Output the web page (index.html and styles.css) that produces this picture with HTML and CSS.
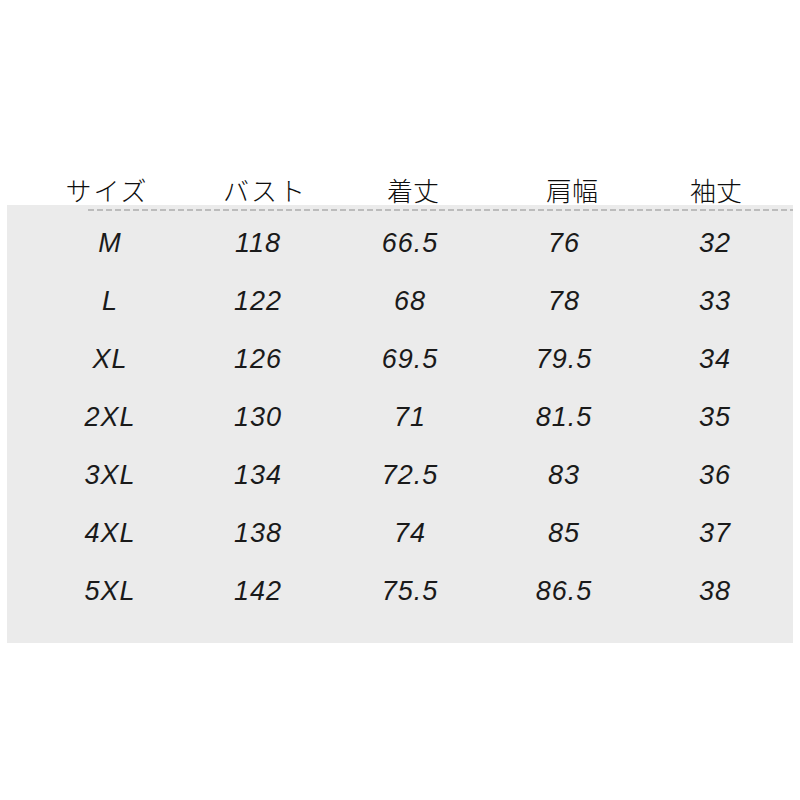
FILE: index.html
```html
<!DOCTYPE html>
<html lang="ja">
<head>
<meta charset="utf-8">
<title>サイズ表</title>
<link rel="stylesheet" href="styles.css">
</head>
<body>
<div class="page">
  <div class="head-row">
    <div class="hcell h1">サイズ</div>
    <div class="hcell h2">バスト</div>
    <div class="hcell h3">着丈</div>
    <div class="hcell h4">肩幅</div>
    <div class="hcell h5">袖丈</div>
  </div>
  <div class="panel">
    <div class="dash"></div>
    <div class="row"><span>M</span><span>118</span><span>66.5</span><span>76</span><span>32</span></div>
    <div class="row"><span>L</span><span>122</span><span>68</span><span>78</span><span>33</span></div>
    <div class="row"><span>XL</span><span>126</span><span>69.5</span><span>79.5</span><span>34</span></div>
    <div class="row"><span>2XL</span><span>130</span><span>71</span><span>81.5</span><span>35</span></div>
    <div class="row"><span>3XL</span><span>134</span><span>72.5</span><span>83</span><span>36</span></div>
    <div class="row"><span>4XL</span><span>138</span><span>74</span><span>85</span><span>37</span></div>
    <div class="row"><span>5XL</span><span>142</span><span>75.5</span><span>86.5</span><span>38</span></div>
  </div>
</div>
</body>
</html>
```
FILE: styles.css
```css
html, body {
  margin: 0;
  padding: 0;
  background: #ffffff;
}
.page {
  width: 800px;
  height: 800px;
  padding-top: 175px;
  box-sizing: border-box;
}
.head-row {
  display: grid;
  grid-template-columns: 150px 166px 130px 188px 100px;
  padding-left: 32px;
  height: 30px;
}
.hcell {
  font-family: "Noto Sans CJK JP", "Noto Sans", sans-serif;
  font-size: 26px;
  font-weight: 300;
  line-height: 30px;
  color: #0e0e0e;
  text-align: center;
}
.h1, .h2 {
  letter-spacing: 2px;
}
.panel {
  margin-left: 7px;
  width: 786px;
  background: #ebebeb;
  padding: 4px 0 23px 0;
  box-sizing: border-box;
}
.dash {
  margin-left: 81px;
  height: 2px;
  margin-bottom: 3px;
  background: repeating-linear-gradient(90deg, #bcbcbc 0 6px, transparent 6px 9px);
}
.row {
  display: grid;
  grid-template-columns: 150px 146px 158px 150px 152px;
  padding-left: 28px;
  height: 58px;
  align-items: center;
}
.row span {
  font-family: "Liberation Sans", Arial, sans-serif;
  font-style: italic;
  font-size: 27px;
  letter-spacing: 1px;
  color: #1a1a1a;
  text-align: center;
}
```
